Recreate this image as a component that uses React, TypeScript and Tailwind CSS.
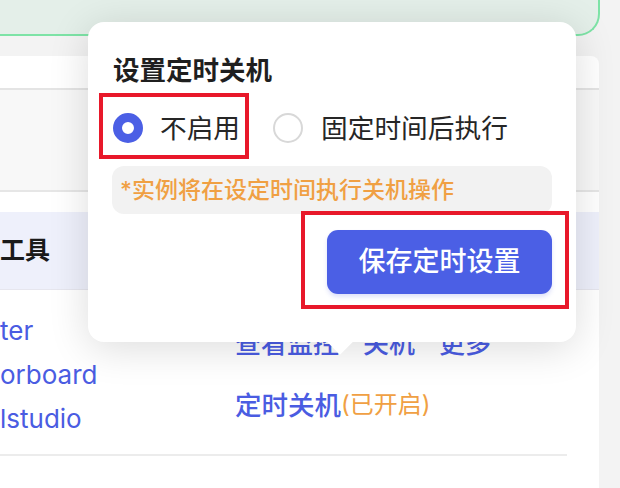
import React from "react";

export default function App() {
  const font = { fontFamily: '"Inter", "Noto Sans CJK SC", sans-serif' };
  return (
    <div
      className="relative w-[620px] h-[488px] overflow-hidden bg-[#f3f3f3] flex flex-col"
      style={font}
    >
      {/* top green banner */}
      <div className="h-[36px] w-[600px] shrink-0 bg-[#e4efe9] border-b-2 border-r-2 border-[#7de3a6] rounded-br-[22px]" />

      {/* main card */}
      <div className="mt-[20px] w-[599px] flex-1 bg-white rounded-tr-[8px] flex flex-col">
        <div className="h-[34px] shrink-0 border-b-2 border-[#e4e4e4]" />
        <div className="h-[102px] shrink-0 bg-[#f8f8f8] border-b-2 border-[#e6e6e6]" />
        <div className="h-[20px] shrink-0" />
        <div className="h-[78px] shrink-0 bg-[#eef0fb] border-b border-[#e6e6ee] flex items-center">
          <span className="text-[25px] font-bold text-[#1a1a1a] leading-none">工具</span>
        </div>
        <div className="flex pr-[32px]">
          <div className="w-[235px] pt-[19px] flex flex-col text-[26px] leading-[44px] text-[#4a5ce2]">
            <span>ter</span>
            <span>orboard</span>
            <span>lstudio</span>
          </div>
          <div className="flex flex-col pt-[41px] text-[#4a5ce2]">
            <div className="flex gap-[24px] text-[26px] leading-[26px] font-medium">
              <span>查看监控</span>
              <span>关机</span>
              <span>更多</span>
            </div>
            <div className="mt-[35px] flex items-center leading-[26px]">
              <span className="text-[26.5px] font-medium">定时关机</span>
              <span className="text-[24px] text-[#f0a043]">(已开启)</span>
            </div>
          </div>
        </div>
        <div className="mt-[13px] mr-[32px] h-[2px] bg-[#ececec]" />
      </div>

      {/* popover */}
      <div className="absolute left-[88px] top-[22px] w-[488px] h-[320px] bg-white rounded-[16px] shadow-[0_6px_40px_rgba(0,0,0,0.14)] flex flex-col px-[24px] pt-[30px]">
        <div className="absolute left-[243px] bottom-[-9px] w-[18px] h-[18px] bg-white rotate-45" />
        <div className="relative text-[26.5px] leading-[36px] font-bold text-[#1f1f1f] pl-[1px]">
          设置定时关机
        </div>
        <div className="relative mt-[22px] flex items-center h-[36px]">
          <span className="w-[30px] h-[30px] rounded-full border-[9px] border-[#4b5fe5] bg-white ml-[1px]" />
          <span className="ml-[17px] text-[26.7px] text-[#262626]">不启用</span>
          <span className="ml-[33px] w-[30px] h-[30px] rounded-full border-2 border-[#d8d8d8] bg-white" />
          <span className="ml-[18px] text-[26.7px] text-[#262626]">固定时间后执行</span>
        </div>
        <div className="relative mt-[20px] h-[48px] rounded-[12px] bg-[#f2f2f2] pl-[8px] flex items-center text-[23px] text-[#f0a043] font-medium">
          *实例将在设定时间执行关机操作
        </div>
        <div className="relative mt-[16px] flex justify-end">
          <button className="w-[225px] h-[64px] rounded-[11px] bg-[#4b5fe5] text-white text-[27px] font-medium shadow-[0_3px_4px_rgba(75,95,229,0.18)]">
            保存定时设置
          </button>
        </div>

        {/* red annotation boxes */}
        <div className="absolute left-[11px] top-[71px] w-[150px] h-[66px] border-4 border-[#e8182a]" />
        <div className="absolute left-[213px] top-[189px] w-[268px] h-[98px] border-4 border-[#e8182a]" />
      </div>
    </div>
  );
}
